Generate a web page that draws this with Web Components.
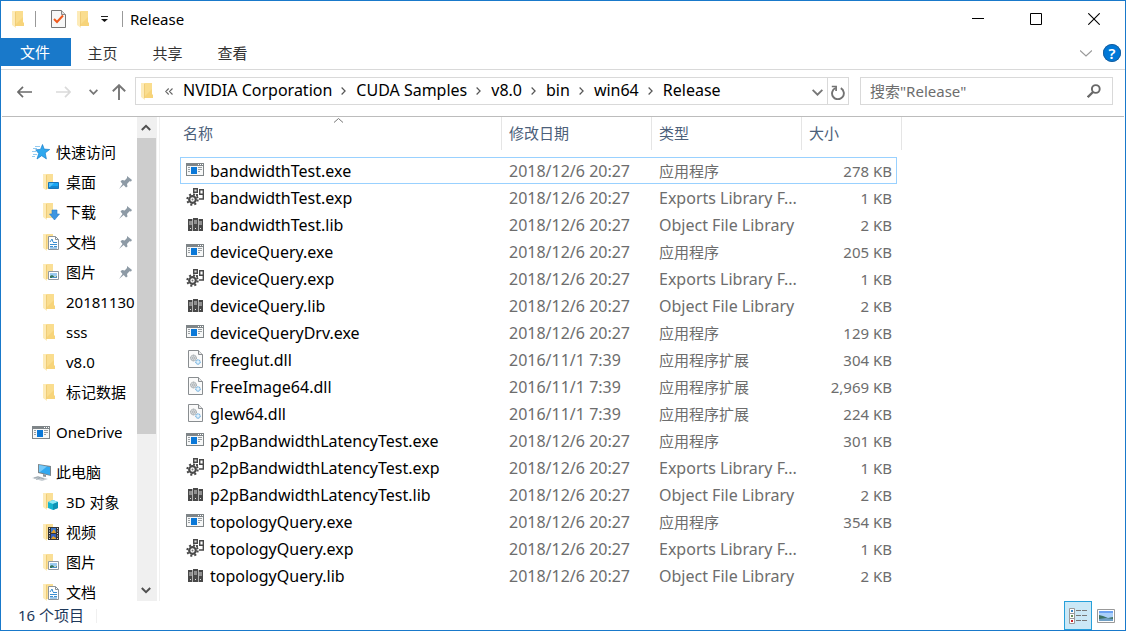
<!DOCTYPE html>
<html lang="zh-CN">
<head>
<meta charset="utf-8">
<title>Release</title>
<style>
html, body { margin: 0; height: 100%; }
body { font: 15px/20px "Noto Sans", "Noto Sans CJK SC", sans-serif; color: #000; background: #fff; }
</style>
</head>
<body>
<explorer-window>
  <title-bar slot="title">Release</title-bar>
  <ribbon-tabs slot="ribbon"></ribbon-tabs>
  <address-row slot="address"></address-row>
  <nav-tree slot="nav"></nav-tree>
  <file-list slot="files"></file-list>
  <status-bar slot="status">16 个项目</status-bar>
</explorer-window>

<script>
const FOLDER = '<path d="M3 0h8v11l1 1v3H3z" fill="#f7d47a"/><path d="M3 0h8v6L4 13z" fill="#fadd8e"/><path d="M0 0h3l1 2v15L0 14z" fill="#fdebb8"/><path d="M3 1h1v14H3z" fill="#f0cd78"/>';
const SMALL_FOLDER = '<path d="M3 0h7v15H3z" fill="#fadf96"/><path d="M0 0h3l1 2v15L0 14z" fill="#fdebb8"/><path d="M3 1h1v14H3z" fill="#f0cd78"/>';
const APP = '<path d="M0 0h18v13H0z" fill="#7f8588"/><path d="M1 3h16v9H1z" fill="#f7f8f8"/><path d="M12 1h1v1h-1zM14 1h1v1h-1zM16 1h1v1h-1z" fill="#fff"/><path d="M5 4h6v7H5z" fill="#0a78d8"/><path d="M2 4.5h2M2 6.5h2M2 8.5h2M12 4.5h4M12 6.5h4M12 8.5h2" stroke="#9a9fa2"/>';
const PICTURE = '<path d="M.5 .5h10v8H.5z" fill="#fff" stroke="#929aa0"/><path d="M2 2h7v3H2z" fill="#9bcaf0"/><path d="M2 5l2-1 3 2 2-1v2H2z" fill="#35775d"/><path d="M4 6h5v1H4z" fill="#4b8fc9"/>';
const PAGE = '<path d="M.5 .5h7l3 3v10H.5z" fill="#fff" stroke="#8b9399"/><path d="M7.500 .5v3h3" fill="none" stroke="#8b9399"/><path d="M2 6l2-3 1 3M2 8.500h7M5 6.500h4M2 10.500h3M6 10.500h3M2 12h7" stroke="#3c8fd0" fill="none"/>';
const ICONS = {
  folder: [12, 17, FOLDER],
  check: [15, 18, '<path d="M.5 .5h10l4 4v13H.5z" fill="#f7f7f7" stroke="#777"/><path d="M10.500 .5v4h4" fill="#ddd" stroke="#888"/><path d="M3 9l3 3 6-6.500" fill="none" stroke="#f05a1e" stroke-width="2"/>'],
  customize: [7, 6, '<path d="M0 .5h7" stroke="#222"/><path d="M0 3h7L3.500 6z" fill="#111"/>'],
  minimize: [12, 12, '<path d="M0 5.500h12" stroke="#000"/>'],
  maximize: [12, 12, '<path d="M.5 .5h11v11H.5z" fill="none" stroke="#000"/>'],
  close: [12, 12, '<path d="M.3 .3l11.400 11.400M11.700 .3L.3 11.700" stroke="#000" stroke-width="1.100"/>'],
  expand: [12, 7, '<path d="M0 .5l6 5.500 6-5.500" fill="none" stroke="#999" stroke-width="1.200"/>'],
  back: [15, 12, '<path d="M15 6H1M6 .8L.9 6 6 11.200" fill="none" stroke="#6b6b6b" stroke-width="1.700"/>'],
  forward: [15, 12, '<path d="M0 6h14M9 .8L14.100 6 9 11.200" fill="none" stroke="#dadada" stroke-width="1.700"/>'],
  down: [9, 6, '<path d="M.6 .8l3.900 4 3.900-4" fill="none" stroke="#777" stroke-width="1.800"/>'],
  drop: [11, 7, '<path d="M.6 .8l4.900 4.900L10.400 .8" fill="none" stroke="#777" stroke-width="1.900"/>'],
  up: [14, 16, '<path d="M7 16V1M.8 7.300L7 1.200l6.200 6.100" fill="none" stroke="#777" stroke-width="1.900"/>'],
  crumb: [5, 8, '<path d="M.6 .5l3.500 3.500L.6 7.500" fill="none" stroke="#555" stroke-width="1.200"/>'],
  more: [8, 7, '<path d="M3.700 .5l-3 3 3 3M7.500 .5l-3 3 3 3" fill="none" stroke="#666" stroke-width="1.100"/>'],
  refresh: [14, 15, '<path d="M4.500 3a5.900 5.900 0 1 0 5.300.2" fill="none" stroke="#727272" stroke-width="1.900"/><path d="M.8 1.500h4.300V6" fill="none" stroke="#727272" stroke-width="1.700"/>'],
  search: [14, 14, '<circle cx="8.800" cy="5" r="3.900" fill="none" stroke="#686868" stroke-width="1.900"/><path d="M6 8L.7 13.200" stroke="#686868" stroke-width="2.400"/>'],
  sort: [9, 5, '<path d="M0 4.500l4.500-4 4.500 4" fill="none" stroke="#777"/>'],
  scrollup: [10, 7, '<path d="M.8 6L5 1.800 9.200 6" fill="none" stroke="#505050" stroke-width="2"/>'],
  scrolldown: [10, 7, '<path d="M.8 1L5 5.200 9.200 1" fill="none" stroke="#505050" stroke-width="2"/>'],
  star: [18, 16, '<path d="M10.500 .5l1.700 4.600 5.500.4-4.500 3.400 1.200 6-4.700-3.200L5 15l1.700-5.500-3-3.700 4.800-.4z" fill="#2fa8ee" stroke="#1c7fcb" stroke-width=".7"/><path d="M3 2.500h5M1 4.500h4M0 7.500h4M1 10.500h4M0 12.500h3" stroke="#77bdec" stroke-width=".8"/>'],
  pin: [13, 13, '<path d="M8 0l5 4-1 1.500-1.500-.2-2.500 2.700.5 2.500L7 11.500 4.700 9 0 13l3.500-5L1.500 5.500 3 4l2.700.5L8 2z" fill="#8d9aa5"/>'],
  app: [18, 14, '<g transform="translate(0 1)">' + APP + '</g>'],
  desktop: [17, 16, SMALL_FOLDER + '<path d="M5.500 8.500h10v6h-10z" fill="#18a5f2" stroke="#1675bb"/><path d="M6 13h9" stroke="#1266a8"/><path d="M6 9h5l-4 4H6z" fill="#52c1fa"/>'],
  downloads: [17, 18, SMALL_FOLDER + '<path d="M9 7h5v4h2.500L11.500 17l-5-6H9z" fill="#3d95e1" stroke="#277cc9" stroke-width=".6"/>'],
  documents: [17, 17, SMALL_FOLDER + '<g transform="translate(5 2)">' + PAGE + '</g>'],
  pictures: [17, 17, SMALL_FOLDER + '<g transform="translate(5 7)">' + PICTURE + '</g>'],
  objects: [17, 18, SMALL_FOLDER + '<path d="M5 9l5-2 5 2v6l-5 2-5-2z" fill="#16b4cf"/><path d="M5 9l5-2 5 2-5 2z" fill="#8de8f4"/><path d="M10 11l5-2v6l-5 2z" fill="#0d93b5"/>'],
  videos: [17, 17, SMALL_FOLDER + '<path d="M5 3h11v13H5z" fill="#353535"/><path d="M6.500 4v11M14.500 4v11" stroke="#ddd" stroke-dasharray="1 1.500"/><path d="M8 4h5v5H8z" fill="#3978d0"/><path d="M8 10h5v5H8z" fill="#315fbd"/><path d="M8 9l3-4 2 4zM8 15l2-3 3 2v1z" fill="#e0a12c"/>'],
  computer: [20, 17, '<path d="M6 0l13 2v10L6 9z" fill="#7b868d"/><path d="M7 1l11 2v8L7 8z" fill="#31a9f1"/><path d="M7 1l8 1.500L8 8H7z" fill="#76c9f8"/><path d="M11 10l3 1v2l-3-.5z" fill="#87939b"/><path d="M0 14l6-2 10 3-6 2z" fill="#c7ced3"/><path d="M2 14l4-1 6 2M4 15.500l4-1.500" stroke="#8e9ba3" fill="none" stroke-width=".7"/>'],
  exe: [18, 18, '<g transform="translate(0 2)">' + APP + '</g>'],
  exp: [18, 18, '<circle cx="6.500" cy="11.500" r="3.300" fill="#fff" stroke="#484848" stroke-width="2.200"/><circle cx="6.500" cy="11.500" r="5.200" fill="none" stroke="#484848" stroke-width="2" stroke-dasharray="2.040 2.040"/><circle cx="6.500" cy="11.500" r="1" fill="#777"/><path d="M7.700 .7h3.600v3.600H7.700z" fill="#ddd" stroke="#484848" stroke-width="1.400"/><path d="M13.700 1.700h3.600v4.600h-3.600zM17.300 5v6h-4.300" fill="none" stroke="#484848" stroke-width="1.400"/><path d="M10 6h2v2h-2z" fill="#555"/>'],
  lib: [18, 18, '<path d="M2 4h5v12H2zM7 3h5v13H7zM12 4h5v12h-5z" fill="#484848"/><path d="M3 6h3v4H3zM8 5h3v4H8zM13 6h3v4h-3z" fill="#8f8f8f"/><path d="M6.500 4v12M12.500 4v12" stroke="#e2e2e2" stroke-width=".7"/><path d="M4 13h1v1H4zM9 13h1v1H9zM14 13h1v1h-1z" fill="#ddd"/>'],
  dll: [18, 18, '<path d="M2.500 .5h10l4 4v13h-14z" fill="#fafafa" stroke="#898d90"/><path d="M12.500 .5v4h4" fill="#e7e7e7" stroke="#898d90"/><circle cx="7.500" cy="8" r="2.900" fill="#d5d9dc" stroke="#8b9296" stroke-dasharray="1.200 .6"/><circle cx="7.500" cy="8" r="1" fill="#fff" stroke="#8b9296" stroke-width=".7"/><circle cx="12" cy="12" r="2.300" fill="#c9e4f7" stroke="#57a1d7" stroke-dasharray="1.200 .6"/><circle cx="12" cy="12" r=".8" fill="#fff"/>'],
  details: [18, 16, '<path d="M.5 .5h5v5h-5zM.5 5.500h5v5h-5zM.5 10.500h5v5h-5z" fill="#fff" stroke="#999"/><path d="M2 2h2v2H2z" fill="#3c86c4"/><path d="M2 7h2v2H2z" fill="#6a8f58"/><path d="M2 12h2v2H2z" fill="#c9252b"/><path d="M7 2.500h5M13 2.500h5M7 7.500h5M13 7.500h5M7 12.500h5M13 12.500h5" stroke="#777"/>'],
  thumbs: [18, 14, '<path d="M.5 .5h17v13H.5z" fill="#fff" stroke="#999"/><path d="M2 2h14v10H2z" fill="#a9cffa"/><path d="M2 2h14v2H2z" fill="#6ca2f3"/><path d="M2 6l4 1 5 2 5-1v2H2z" fill="#3d7164"/><path d="M2 10l7-1 7 1v2H2z" fill="#6f9fc4"/>']
};

function define(name, html, setup) {
  const template = document.createElement('template');
  template.innerHTML = html;
  customElements.define(name, class extends HTMLElement {
    constructor() {
      super();
      this.attachShadow({ mode: 'open' }).append(template.content.cloneNode(true));
    }
    connectedCallback() { if (setup) setup(this, this.shadowRoot); }
  });
}

const CONTROL = `
  button { font: inherit; color: inherit; border: 0; padding: 0; margin: 0; background: none; display: flex; align-items: center; justify-content: center; }
  a { color: inherit; text-decoration: none; }
`;

define('ui-icon', '<style>:host{display:block;flex:none} svg{display:block}</style>', (host, root) => {
  const [w, h, body] = ICONS[host.getAttribute('name')];
  root.innerHTML = `<style>:host{display:block;flex:none} svg{display:block}</style><svg width="${w}" height="${h}" viewBox="0 0 ${w} ${h}" aria-hidden="true">${body}</svg>`;
});

define('explorer-window', `
<style>
  :host { display: flex; flex-direction: column; box-sizing: border-box; height: 100vh; border: 1px solid #1979ca; background: #fff; }
  main { flex: 1; min-height: 0; display: flex; border-top: 1px solid #bcbcbc; margin: 0 1px; }
  ::slotted(file-list) { flex: 1; min-width: 0; }
</style>
<slot name="title"></slot><slot name="ribbon"></slot><slot name="address"></slot>
<main><slot name="nav"></slot><slot name="files"></slot></main>
<slot name="status"></slot>`);

define('title-bar', `
<style>${CONTROL}
  :host { display: flex; align-items: center; box-sizing: border-box; height: 37px; padding: 0 2px 1px 11px; }
  i { width: 1px; height: 16px; background: #999; }
  .check { margin: 0 11px 0 15px; }
  .folder { margin-right: 12px; }
  .first { margin-right: 11px; }
  .more { margin-right: 14px; height: 16px; }
  h1 { flex: 1; margin: 0 0 0 7px; font: inherit; }
  .win { width: 58px; height: 36px; }
</style>
<ui-icon class="first" name="folder"></ui-icon><i></i>
<button class="check" aria-label="属性"><ui-icon name="check"></ui-icon></button>
<button class="folder" aria-label="新建文件夹"><ui-icon name="folder"></ui-icon></button>
<button class="more" aria-label="自定义快速访问工具栏"><ui-icon name="customize"></ui-icon></button><i></i>
<h1><slot></slot></h1>
<button class="win" aria-label="最小化"><ui-icon name="minimize"></ui-icon></button>
<button class="win" aria-label="最大化"><ui-icon name="maximize"></ui-icon></button>
<button class="win" aria-label="关闭"><ui-icon name="close"></ui-icon></button>`);

define('ribbon-tabs', `
<style>${CONTROL}
  :host { display: flex; height: 31px; border-bottom: 1px solid #d9d9d9; color: #333; }
  button { width: 65px; height: 28px; padding: 2px 2px 0 0; }
  .file { width: 70px; background: #1979ca; color: #fff; padding-top: 0; }
  .toggle { width: 12px; margin: 0 11px 0 auto; padding: 2px 0 0; }
  .help { width: 18px; height: 18px; margin: 6px 4px 0 0; padding: 0; border-radius: 50%; background: #0078d7; box-shadow: inset 0 0 0 1px #1b5f9c; color: #fff; font-weight: 600; }
</style>
<button class="file">文件</button><button>主页</button><button>共享</button><button>查看</button>
<button class="toggle" aria-label="展开功能区"><ui-icon name="expand"></ui-icon></button>
<button class="help">?</button>`);

define('address-row', `
<style>${CONTROL}
  :host { display: flex; align-items: center; box-sizing: border-box; height: 46px; padding: 0 12px 4px 16px; }
  .back { margin-right: 24px; } .fwd { margin-right: 18px; } .recent { margin-right: 14px; } .up { margin-right: 9px; }
  :host > button { padding-top: 2px; }
  .back, .fwd, .recent, .up { padding-top: 2px; }
  nav { flex: 1; min-width: 0; display: flex; align-items: center; box-sizing: border-box; height: 28px; border: 1px solid #d9d9d9; padding-left: 5px; margin-right: 11px; }
  a { font-size: 16px; padding-bottom: 2px; white-space: nowrap; }
  .more { margin: 0 10px 0 12px; }
  .sep { margin: 0 10px 0 9px; }
  .drop { margin: 3px 4px 0 auto; }
  .refresh { width: 21px; height: 26px; box-sizing: border-box; padding-top: 2px; border-left: 1px solid #d9d9d9; }
  form { display: flex; align-items: center; box-sizing: border-box; width: 253px; height: 28px; border: 1px solid #d9d9d9; padding: 0 11px 0 9px; margin: 0; }
  input { flex: 1; min-width: 0; border: 0; outline: 0; padding: 0; font: inherit; background: none; }
  input::placeholder { color: #6d6d6d; opacity: 1; }
</style>
<button class="back" aria-label="后退"><ui-icon name="back"></ui-icon></button>
<button class="fwd" aria-label="前进" disabled><ui-icon name="forward"></ui-icon></button>
<button class="recent" aria-label="最近位置"><ui-icon name="down"></ui-icon></button>
<button class="up" aria-label="上移"><ui-icon name="up"></ui-icon></button>
<nav aria-label="地址">
  <ui-icon name="folder"></ui-icon><ui-icon class="more" name="more"></ui-icon>
  <a href="#nvidia">NVIDIA Corporation</a><ui-icon class="sep" name="crumb"></ui-icon>
  <a href="#samples">CUDA Samples</a><ui-icon class="sep" name="crumb"></ui-icon>
  <a href="#v8">v8.0</a><ui-icon class="sep" name="crumb"></ui-icon>
  <a href="#bin">bin</a><ui-icon class="sep" name="crumb"></ui-icon>
  <a href="#win64">win64</a><ui-icon class="sep" name="crumb"></ui-icon>
  <a href="#release">Release</a>
  <button class="drop" aria-label="以前的位置"><ui-icon name="drop"></ui-icon></button>
  <button class="refresh" aria-label="刷新"><ui-icon name="refresh"></ui-icon></button>
</nav>
<form><input type="text" aria-label="搜索" placeholder='搜索"Release"'><button type="button" aria-label="开始搜索"><ui-icon name="search"></ui-icon></button></form>`);

define('nav-item', `
<style>${CONTROL}
  :host { display: block; }
  a { display: flex; align-items: center; height: 30px; padding-left: 42px; white-space: nowrap; }
  .icon { display: flex; width: 22px; }
  .icon ui-icon { margin-left: -1px; }
  .pin { margin: 0 5px 0 auto; }
  :host([root]) a { padding-left: 31px; }
  :host([root]) .icon { width: 23px; }
</style>
<a href="#"><span class="icon"></span><span><slot></slot></span></a>`, (host, root) => {
  root.querySelector('.icon').innerHTML = `<ui-icon name="${host.getAttribute('icon')}"></ui-icon>`;
  if (host.hasAttribute('pinned')) root.querySelector('a').insertAdjacentHTML('beforeend', '<ui-icon class="pin" name="pin"></ui-icon>');
});

define('nav-tree', `
<style>${CONTROL}
  :host { display: flex; flex: none; width: 157px; border-right: 1px solid #f0f0f0; }
  nav { width: 135px; overflow: hidden; padding-top: 20px; box-sizing: border-box; }
  section { margin-bottom: 10px; }
  .bar { display: flex; flex-direction: column; width: 20px; background: #f0f0f0; }
  .bar button { width: 18px; height: 21px; }
  .track { flex: 1; }
  .thumb { height: 67%; width: 19px; background: #cdcdcd; }
</style>
<nav aria-label="导航">
  <section>
    <nav-item root icon="star">快速访问</nav-item>
    <nav-item icon="desktop" pinned>桌面</nav-item>
    <nav-item icon="downloads" pinned>下载</nav-item>
    <nav-item icon="documents" pinned>文档</nav-item>
    <nav-item icon="pictures" pinned>图片</nav-item>
    <nav-item icon="folder">20181130</nav-item>
    <nav-item icon="folder">sss</nav-item>
    <nav-item icon="folder">v8.0</nav-item>
    <nav-item icon="folder">标记数据</nav-item>
  </section>
  <section><nav-item root icon="app">OneDrive</nav-item></section>
  <section>
    <nav-item root icon="computer">此电脑</nav-item>
    <nav-item icon="objects">3D 对象</nav-item>
    <nav-item icon="videos">视频</nav-item>
    <nav-item icon="pictures">图片</nav-item>
    <nav-item icon="documents">文档</nav-item>
  </section>
</nav>
<div class="bar">
  <button aria-label="向上滚动"><ui-icon name="scrollup"></ui-icon></button>
  <div class="track"><div class="thumb"></div></div>
  <button aria-label="向下滚动"><ui-icon name="scrolldown"></ui-icon></button>
</div>`);

const D = '2018/12/6 20:27', D2 = '2016/11/1 7:39';
const TYPES = { exe: '应用程序', exp: 'Exports Library F...', lib: 'Object File Library', dll: '应用程序扩展' };
const FILES = [
  ['bandwidthTest.exe', D, '278 KB'], ['bandwidthTest.exp', D, '1 KB'], ['bandwidthTest.lib', D, '2 KB'],
  ['deviceQuery.exe', D, '205 KB'], ['deviceQuery.exp', D, '1 KB'], ['deviceQuery.lib', D, '2 KB'],
  ['deviceQueryDrv.exe', D, '129 KB'], ['freeglut.dll', D2, '304 KB'], ['FreeImage64.dll', D2, '2,969 KB'],
  ['glew64.dll', D2, '224 KB'], ['p2pBandwidthLatencyTest.exe', D, '301 KB'], ['p2pBandwidthLatencyTest.exp', D, '1 KB'],
  ['p2pBandwidthLatencyTest.lib', D, '2 KB'], ['topologyQuery.exe', D, '354 KB'], ['topologyQuery.exp', D, '1 KB'],
  ['topologyQuery.lib', D, '2 KB']
];

define('file-list', `
<style>
  :host { display: block; overflow: hidden; padding-left: 20px; }
  table { table-layout: fixed; width: 717px; border-collapse: separate; border-spacing: 0; }
  th { padding: 0 0 7px; font-weight: 400; text-align: left; color: #4c607a; }
  th div { position: relative; box-sizing: border-box; height: 33px; padding: 6px 0 0 7px; border-right: 1px solid #e5e5e5; }
  th:first-child div { padding-left: 3px; }
  th:last-child div { margin-right: -5px; }
  th ui-icon { position: absolute; top: 1px; left: 50%; margin-left: -7px; }
  td { box-sizing: border-box; height: 27px; padding: 0 0 0 7px; color: #6d6d6d; white-space: nowrap; border: solid transparent; border-width: 1px 0; }
  td:first-child { padding-left: 5px; color: #000; border-left-width: 1px; }
  td:last-child { padding-right: 4px; text-align: right; border-right-width: 1px; }
  .latin { font-size: 16px; }
  .name { display: flex; align-items: center; gap: 6px; }
  .name ui-icon { margin-bottom: 1px; }
  .sel td { border-color: #99d1ff; }
</style>
<table>
  <colgroup><col style="width:322px"><col style="width:150px"><col style="width:150px"><col></colgroup>
  <thead><tr><th><div>名称<ui-icon name="sort"></ui-icon></div></th><th><div>修改日期</div></th><th><div>类型</div></th><th><div>大小</div></th></tr></thead>
  <tbody></tbody>
</table>`, (host, root) => {
  root.querySelector('tbody').innerHTML = FILES.map(([name, date, size], i) => {
    const kind = name.split('.').pop();
    const latin = /^[A-Z]/.test(TYPES[kind]) ? ' class="latin"' : '';
    return `<tr${i ? '' : ' class="sel"'}><td class="latin"><div class="name"><ui-icon name="${kind}"></ui-icon><span>${name}</span></div></td><td class="latin">${date}</td><td${latin}>${TYPES[kind]}</td><td>${size}</td></tr>`;
  }).join('');
});

define('status-bar', `
<style>${CONTROL}
  :host { display: flex; align-items: center; height: 29px; padding: 0 5px 0 17px; color: #1e395b; }
  span { padding-bottom: 2px; }
  i { width: 1px; height: 14px; background: #f0f0f0; margin: 0 auto 0 12px; }
  button { width: 28px; height: 29px; box-sizing: border-box; }
  .on { border: 1px solid #26a0da; background: #cbe8f6; }
</style>
<span><slot></slot></span><i></i>
<button class="on" aria-label="详细信息"><ui-icon name="details"></ui-icon></button>
<button aria-label="大缩略图"><ui-icon name="thumbs"></ui-icon></button>`);
</script>
</body>
</html>
